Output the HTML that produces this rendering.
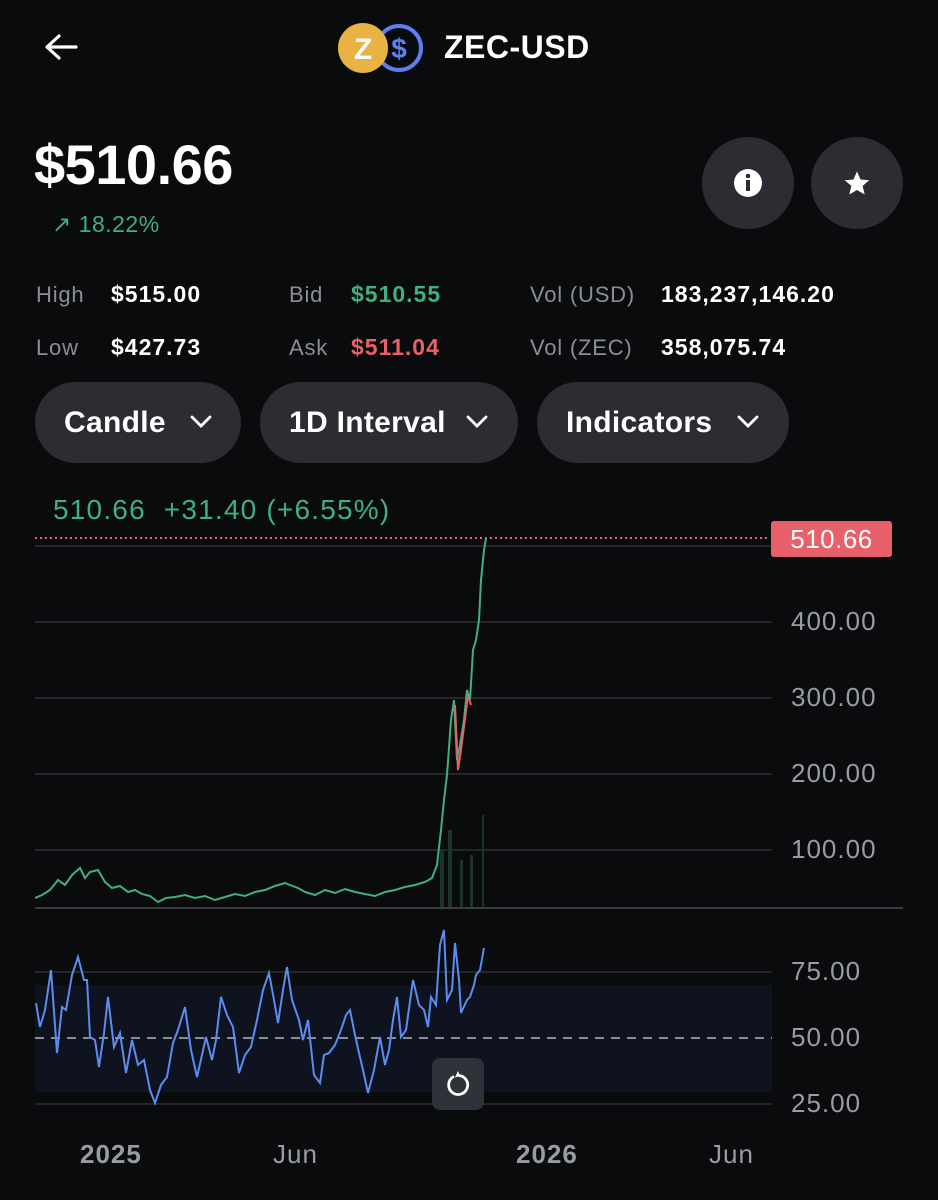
<!DOCTYPE html>
<html><head><meta charset="utf-8"><style>
body{margin:0;width:938px;height:1200px;background:#0a0b0d;font-family:"Liberation Sans",sans-serif;color:#fff;position:relative;overflow:hidden}
.a{position:absolute;white-space:nowrap}
.pill{position:absolute;top:382px;height:81px;border-radius:41px;background:#2b2d33;font-size:30px;font-weight:bold;line-height:81px;box-sizing:border-box;padding-left:29px;letter-spacing:0.3px}
.pill svg{position:absolute;top:31px}
.lbl{color:#8b8e94;font-size:22px;letter-spacing:0.8px}
.val{font-size:23px;font-weight:bold;letter-spacing:1px}
.ax{color:#9a9ca3;font-size:26px;letter-spacing:1px}
</style></head><body>
<svg class="a" style="left:40px;top:30px" width="42" height="36" viewBox="0 0 42 36"><path d="M36 17H8M19 6L7 17L19 28" stroke="#fff" stroke-width="3.2" fill="none" stroke-linecap="round" stroke-linejoin="round"/></svg>
<svg class="a" style="left:335px;top:20px" width="95" height="56" viewBox="0 0 95 56">
<circle cx="64" cy="28" r="22" fill="#0a0b0d" stroke="#5b80f2" stroke-width="4"/>
<text x="64" y="38" font-size="28" font-weight="bold" fill="#5b80f2" text-anchor="middle" font-family="Liberation Sans">$</text>
<circle cx="28" cy="28" r="25" fill="#e8b343"/>
<text x="28" y="39" font-size="30" font-weight="bold" fill="#fff" text-anchor="middle" font-family="Liberation Sans">Z</text>
</svg>
<div class="a" style="left:444px;top:29px;font-size:32px;font-weight:bold;letter-spacing:0.5px">ZEC-USD</div>
<div class="a" style="left:34px;top:132px;font-size:56px;font-weight:bold;letter-spacing:-0.5px">$510.66</div>
<div class="a" style="left:52px;top:211px;font-size:23px;color:#3fb07e;letter-spacing:0.5px">↗ 18.22%</div>
<div class="a" style="left:702px;top:137px;width:92px;height:92px;border-radius:50%;background:#2b2d33"></div>
<svg class="a" style="left:733px;top:168px" width="30" height="30" viewBox="0 0 30 30"><circle cx="15" cy="15" r="14" fill="#fff"/><rect x="13" y="12" width="4" height="11" fill="#2b2d33"/><circle cx="15" cy="8" r="2.3" fill="#2b2d33"/></svg>
<div class="a" style="left:811px;top:137px;width:92px;height:92px;border-radius:50%;background:#2b2d33"></div>
<svg class="a" style="left:843px;top:169px" width="28" height="28" viewBox="0 0 24 24"><path d="M12 2l3 7 7.5.6-5.7 4.9 1.8 7.4L12 18l-6.6 3.9 1.8-7.4L1.5 9.6 9 9z" fill="#fff"/></svg>
<div class="a lbl" style="left:36px;top:282px">High</div><div class="a val" style="left:111px;top:281px">$515.00</div>
<div class="a lbl" style="left:289px;top:282px">Bid</div><div class="a val" style="left:351px;top:281px;color:#3fb07e">$510.55</div>
<div class="a lbl" style="left:530px;top:282px">Vol (USD)</div><div class="a val" style="left:661px;top:281px">183,237,146.20</div>
<div class="a lbl" style="left:36px;top:335px">Low</div><div class="a val" style="left:111px;top:334px">$427.73</div>
<div class="a lbl" style="left:289px;top:335px">Ask</div><div class="a val" style="left:351px;top:334px;color:#e8606a">$511.04</div>
<div class="a lbl" style="left:530px;top:335px">Vol (ZEC)</div><div class="a val" style="left:661px;top:334px">358,075.74</div>
<div class="pill" style="left:35px;width:206px">Candle<svg style="left:154px" width="24" height="18" viewBox="0 0 24 18"><path d="M3 4l9 9 9-9" stroke="#fff" stroke-width="2.8" fill="none" stroke-linecap="round"/></svg></div>
<div class="pill" style="left:260px;width:258px">1D Interval<svg style="left:205px" width="24" height="18" viewBox="0 0 24 18"><path d="M3 4l9 9 9-9" stroke="#fff" stroke-width="2.8" fill="none" stroke-linecap="round"/></svg></div>
<div class="pill" style="left:537px;width:252px">Indicators<svg style="left:199px" width="24" height="18" viewBox="0 0 24 18"><path d="M3 4l9 9 9-9" stroke="#fff" stroke-width="2.8" fill="none" stroke-linecap="round"/></svg></div>
<div class="a" style="left:53px;top:494px;font-size:28px;color:#3fb07e;letter-spacing:1.2px">510.66&nbsp; +31.40 (+6.55%)</div>
<svg class="a" style="left:0;top:0" width="938" height="1200">
<g stroke="#24262b" stroke-width="2"><line x1="35" y1="546" x2="772" y2="546"/><line x1="35" y1="622" x2="772" y2="622"/><line x1="35" y1="698" x2="772" y2="698"/><line x1="35" y1="774" x2="772" y2="774"/><line x1="35" y1="850" x2="772" y2="850"/></g>
<line x1="35" y1="538" x2="770" y2="538" stroke="#e8606a" stroke-width="2" stroke-dasharray="2 3"/>
<line x1="35" y1="908" x2="903" y2="908" stroke="#3a3c42" stroke-width="2"/>
<polyline fill="none" stroke="#3fb07e" stroke-width="2" points="35,898 42,895 50,890 58,880 65,885 72,875 80,868 85,878 90,872 98,870 105,882 112,888 120,886 128,892 135,890 142,894 150,896 158,902 166,898 175,897 185,895 195,898 205,896 215,900 225,897 235,894 245,896 255,892 265,890 275,886 285,883 290,885 298,888 305,892 315,895 325,890 335,893 345,889 355,892 365,894 375,896 385,892 395,890 405,887 415,885 425,882 432,878 437,865 441,830 444,800 447,775 451,720 454,700 457,760 460,745 464,720 467,690 470,700 473,650 476,640 479,620 481,580 484,550 486,538"/>
<polyline fill="none" stroke="#e8606a" stroke-width="2" points="455,705 458,770 461,750 468,695 471,705"/>
<g fill="#1c3329"><rect x="440" y="850" width="4" height="57"/><rect x="448" y="830" width="4" height="77"/><rect x="460" y="860" width="3" height="47"/><rect x="470" y="855" width="3" height="52"/><rect x="482" y="815" width="2" height="92"/></g>
<rect x="35" y="985" width="737" height="107" fill="#0f1320"/>
<g stroke="#24262b" stroke-width="2"><line x1="35" y1="972" x2="772" y2="972"/><line x1="35" y1="1104" x2="772" y2="1104"/></g>
<line x1="35" y1="1038" x2="772" y2="1038" stroke="#8a8d93" stroke-width="2" stroke-dasharray="9 7"/>
<polyline fill="none" stroke="#5b8cf0" stroke-width="2" points="36,1003 40,1027 45,1010 51,970 57,1053 62,1007 66,1010 72,975 78,957 84,980 87,980 90,1037 95,1040 99,1067 104,1033 108,997 114,1047 120,1033 126,1073 132,1040 138,1065 144,1060 150,1090 155,1103 161,1085 167,1077 173,1043 178,1030 185,1007 191,1050 197,1077 202,1055 206,1037 212,1060 216,1040 221,997 227,1015 233,1027 239,1073 245,1055 251,1047 257,1020 263,990 269,973 274,1000 278,1023 283,990 287,967 292,1000 299,1020 303,1040 308,1020 314,1075 320,1083 324,1055 329,1053 335,1045 341,1030 346,1015 350,1010 355,1035 359,1053 363,1070 368,1093 374,1070 380,1037 385,1065 389,1050 393,1020 397,997 401,1037 406,1030 413,980 419,1005 424,1010 428,1027 431,997 436,1005 440,945 444,930 447,1000 452,990 455,943 459,980 461,1013 467,1000 470,997 474,985 476,975 480,970 484,948"/>
</svg>
<div class="a" style="left:771px;top:521px;width:121px;height:36px;background:#e8606a;border-radius:3px;color:#fff;font-size:26px;text-align:center;line-height:36px;letter-spacing:0.5px">510.66</div>
<div class="a ax" style="left:791px;top:606px">400.00</div>
<div class="a ax" style="left:791px;top:682px">300.00</div>
<div class="a ax" style="left:791px;top:758px">200.00</div>
<div class="a ax" style="left:791px;top:834px">100.00</div>
<div class="a ax" style="left:791px;top:956px">75.00</div>
<div class="a ax" style="left:791px;top:1022px">50.00</div>
<div class="a ax" style="left:791px;top:1088px">25.00</div>
<div class="a" style="left:432px;top:1058px;width:52px;height:52px;border-radius:8px;background:#2f3238"></div>
<svg class="a" style="left:444px;top:1070px" width="28" height="28" viewBox="0 0 28 28"><path d="M9 7A9.5 9.5 0 1 0 15 5.5" stroke="#fff" stroke-width="2.8" fill="none" stroke-linecap="round"/><path d="M14 1l2 5-5 1.5z" fill="#fff"/></svg>
<div class="a ax" style="left:80px;top:1139px;font-weight:bold">2025</div>
<div class="a ax" style="left:273px;top:1139px">Jun</div>
<div class="a ax" style="left:516px;top:1139px;font-weight:bold">2026</div>
<div class="a ax" style="left:709px;top:1139px">Jun</div>
</body></html>
